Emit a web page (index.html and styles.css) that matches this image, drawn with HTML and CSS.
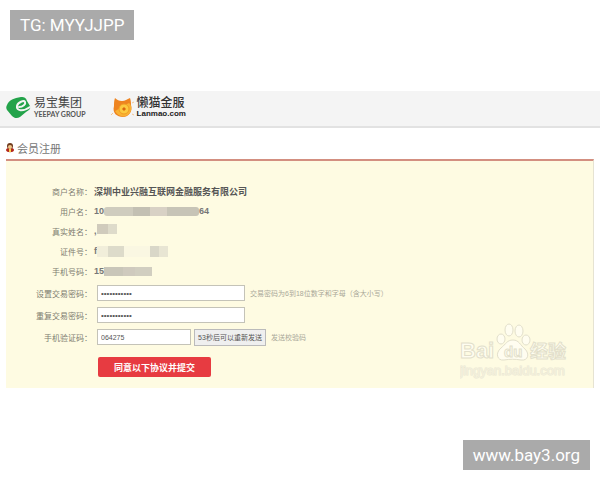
FILE: index.html
```html
<!DOCTYPE html>
<html lang="zh-CN">
<head>
    <meta charset="UTF-8">
    <meta name="viewport" content="width=device-width, initial-scale=1.0">
    <title>会员注册</title>
    <link rel="stylesheet" href="styles.css">
</head>
<body>

    <div class="tag tag-top">TG: MYYJJPP</div>

    <header class="topbar">
        <div class="brand">
            <svg class="logo-yeepay" width="26" height="22" viewBox="0 0 26 22">
                <path fill="#23a34a" d="M1 8 C3 3 8 1 15 0 C19 0 20 1 21 4 L24 9 C25 12 23 13 20 15 L14 20 C11 22 8 21 6 19 L1 13 C0 11 0 10 1 8 Z"/>
                <path fill="none" stroke="#f5f5f5" stroke-width="2" stroke-linecap="round" d="M13 10 C17 10 20 7 19 5 C18 3 12 5 11 9 C10 14 17 15 24 10"/>
            </svg>
            <div class="brand-text">
                <span class="brand-cn">易宝集团</span>
                <span class="brand-en">YEEPAY GROUP</span>
            </div>
        </div>
        <div class="brand brand-lanmao">
            <svg class="logo-lanmao" width="24" height="22" viewBox="0 0 24 22">
                <path fill="#ee8420" d="M4 1 C6 3 8 4 11 4 C14 4 16 2 19 1 C20 4 20 6 20 8 C22 14 18 20 12 20 C6 20 1 16 3 9 C3 6 3 4 4 1 Z"/>
                <path fill="#f9b233" d="M4 14 C7 13 11 9 18 6 C21 8 21 14 18 17 C14 21 7 20 4 14 Z"/>
                <circle cx="13" cy="12" r="5" fill="#fcc93f" stroke="#f29b22"/>
                <path fill="#d9660f" d="M13 10 L15 12 L13 14 L11 12 Z"/>
                <path stroke="#f3c491" d="M21 6 L23 5 M2 16 L0 18 M21 17 L23 18"/>
            </svg>
            <div class="brand-text">
                <span class="brand-cn">懒猫金服</span>
                <span class="brand-en">Lanmao.com</span>
            </div>
        </div>
    </header>

    <main>
        <h1 class="title">
            <svg width="8" height="10" viewBox="0 0 8 10">
                <path fill="#b3261e" d="M0 7 C0 4 8 4 8 7 C8 10 0 10 0 7 Z"/>
                <circle cx="4" cy="3" r="3" fill="#6e3a1c"/>
                <circle cx="4" cy="4" r="2" fill="#f3c58c"/>
                <path fill="#f7d34a" d="M3 6 H5 V9 H3 Z"/>
            </svg>
            会员注册
        </h1>

        <form class="panel">
            <div class="row">
                <span class="label">商户名称：</span>
                <strong class="company">深圳中业兴融互联网金融服务有限公司</strong>
            </div>
            <div class="row">
                <span class="label">用户名：</span>
                <span class="value">10<i class="mask mask-user"></i>64</span>
            </div>
            <div class="row">
                <span class="label">真实姓名：</span>
                <span class="value">,<i class="mask mask-name"></i></span>
            </div>
            <div class="row">
                <span class="label">证件号：</span>
                <span class="value">f<i class="mask mask-id"></i></span>
            </div>
            <div class="row">
                <span class="label">手机号码：</span>
                <span class="value">15<i class="mask mask-phone"></i></span>
            </div>

            <div class="fields">
                <div class="row row-field">
                    <label class="label" for="pwd">设置交易密码：</label>
                    <input type="password" id="pwd" value="12345678901">
                    <span class="hint">交易密码为6到18位数字和字母（含大小写）</span>
                </div>
                <div class="row row-field">
                    <label class="label" for="pwd2">重复交易密码：</label>
                    <input type="password" id="pwd2" value="12345678901">
                </div>
                <div class="row row-field">
                    <label class="label" for="code">手机验证码：</label>
                    <input type="text" id="code" class="code" value="064275">
                    <button type="button" class="btn-send">53秒后可以重新发送</button>
                    <span class="hint">发送校验码</span>
                </div>
            </div>

            <button type="submit" class="btn-submit">同意以下协议并提交</button>

            <!-- 水印 -->
            <svg class="watermark" width="110" height="60" viewBox="0 0 110 60">
                <g class="outline">
                    <ellipse cx="49" cy="8" rx="4" ry="6"/>
                    <ellipse cx="59" cy="9" rx="4" ry="6"/>
                    <ellipse cx="41" cy="17" rx="4" ry="5"/>
                    <ellipse cx="66" cy="18" rx="4" ry="5"/>
                    <path d="M53 18 C47 18 46 22 41 26 C35 31 37 39 44 38 C50 37 55 37 61 38 C68 39 70 32 65 27 C60 23 59 18 53 18 Z"/>
                    <text class="wm-latin" x="0" y="36">Bai</text>
                    <text class="wm-du" x="44" y="35">du</text>
                    <text class="wm-cn" x="70" y="36">经验</text>
                </g>
                <text class="wm-url" x="0" y="53">jingyan.baidu.com</text>
            </svg>
        </form>
    </main>

    <div class="tag tag-bottom">www.bay3.org</div>

</body>
</html>
```

FILE: styles.css
```css
:root {
    --cream: #fefbe2; --gray: #7d7b70; --red: #e73b41; --line: #c4c3b8;
}
* { box-sizing: border-box; }
body { margin: 0; background: #fff; color: #555; font-family: "Liberation Sans", "Noto Sans CJK SC", sans-serif; }

/* 角标 */
.tag { position: fixed; padding: 0 10px; height: 30px; line-height: 30px; background: #aaa; color: #fff; font-family: Roboto, sans-serif; font-size: 17px; }
.tag-top { top: 10px; left: 10px; }
.tag-bottom { right: 10px; bottom: 10px; }

/* 顶部 */
.topbar { display: flex; align-items: center; gap: 25px; height: 37px; margin-top: 91px; padding: 0 6px 2px; background: #f4f4f4; border-bottom: 2px solid #e2e2e2; }
.brand { display: flex; align-items: center; gap: 2px; }
.brand-text { display: flex; flex-direction: column; }
.brand-cn { font-size: 12px; line-height: 13px; color: #444; white-space: nowrap; }
.brand-en { font-family: Lato, sans-serif; font-size: 7px; line-height: 8px; font-weight: bold; color: #555; white-space: nowrap; }
.brand-lanmao .brand-cn { font-weight: 500; color: #333; }
.brand-lanmao .brand-en { font-family: "Liberation Sans", sans-serif; font-size: 8px; color: #222; }

main { padding: 0 6px; }
.title { display: flex; align-items: center; gap: 3px; height: 31px; margin: 0; padding-top: 8px; font-size: 11px; font-weight: normal; color: #777; }

/* 表单 */
.panel { position: relative; padding: 20px 0 11px; background: var(--cream); border-top: 2px solid #d38f80; border-right: 1px solid #e6e3d2; }
.row { display: flex; align-items: center; gap: 2px; height: 20px; font-size: 9px; }
.row-field { gap: 5px; height: 22px; }
.fields { margin-top: 1px; }
.label { width: 86px; flex: none; text-align: right; font-size: 8px; color: var(--gray); white-space: nowrap; }
.company { font-size: 9px; color: #555; white-space: nowrap; }
.value { display: flex; align-items: center; font-size: 9px; font-weight: bold; color: #777; }

/* 打码 */
.mask { display: block; height: 9px; }
.mask-user { width: 95px; background: linear-gradient(90deg, #cfccbe 30%, #c3c0b3 30% 48%, #d8d1c5 48% 66%, #c7c4b7 66%); border-radius: 3px; }
.mask-name { width: 20px; height: 10px; margin-bottom: 5px; background: linear-gradient(90deg, #d0cbbc 55%, #dedbca 55%); }
.mask-id { width: 71px; height: 11px; background: linear-gradient(90deg, #f1eeda 15%, #dddbca 15% 38%, #faf7e2 38% 75%, #d9d7c8 75% 88%, #e8e5d3 88%); }
.mask-phone { width: 48px; background: linear-gradient(90deg, #c9c6b9 40%, #cfcabe 40% 65%, #d1cec0 65%); }

input { width: 148px; height: 16px; padding: 0 3px; border: 1px solid var(--line); background: #fff; color: #555; font-family: inherit; font-size: 8px; }
input.code { width: 94px; font-size: 7px; }
.hint { font-size: 7px; color: #aaa899; white-space: nowrap; }

button { padding: 0; font-family: inherit; cursor: pointer; white-space: nowrap; }
.btn-send { width: 72px; height: 17px; margin-left: -2px; border: 1px solid #bbb; background: #efefef; color: #555; font-size: 7px; }
.btn-submit { display: block; width: 113px; height: 20px; margin: 9px 0 0 92px; border: none; border-radius: 2px; background: var(--red); color: #fff; font-size: 9px; font-weight: bold; }

/* 水印 */
.watermark { position: absolute; right: 23px; bottom: 6px; }
.outline { fill: #fffdf0; stroke: #e2dfcb; stroke-width: 1; }
.wm-latin { font-size: 22px; font-weight: bold; }
.wm-du { font-size: 15px; font-weight: bold; }
.wm-cn { font-size: 18px; font-weight: bold; }
.wm-url { font-size: 13px; fill: #f3f0dc; stroke: #ebe8d4; stroke-width: 1; paint-order: stroke; }
```
